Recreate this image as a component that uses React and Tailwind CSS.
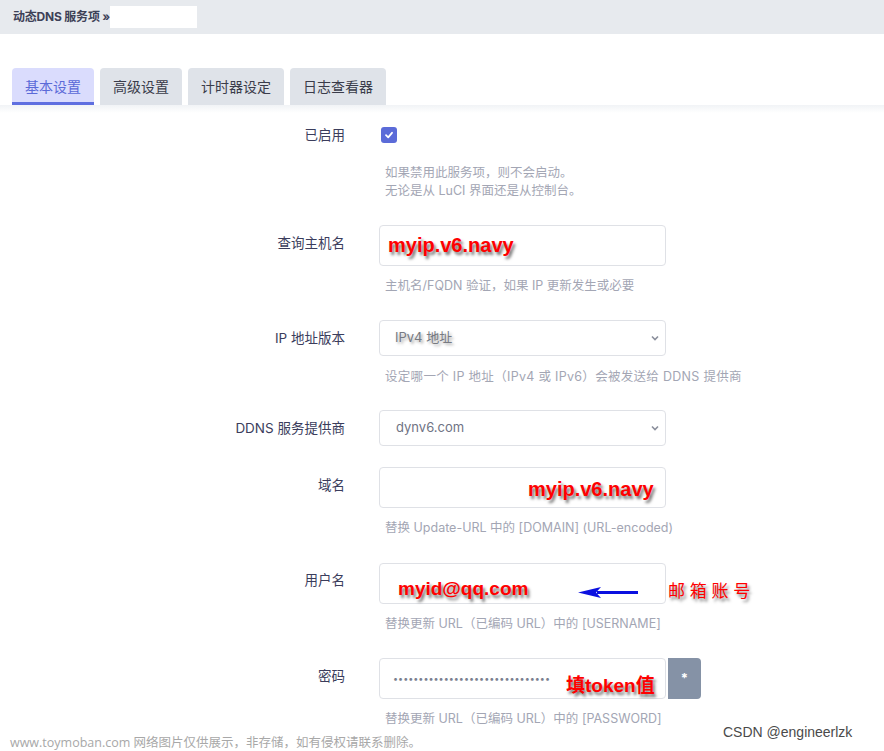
import React from 'react';

const font = { fontFamily: 'Inter, "Noto Sans CJK SC", sans-serif' };
const red = 'font-bold text-[#ff0000] [text-shadow:2px_3px_3px_rgba(0,0,0,0.55)] [font-family:"Liberation_Sans","Noto_Sans_CJK_SC",sans-serif]';

const Label = ({ children, pt = 'pt-[8px]' }) => (
  <div className={`w-[346px] shrink-0 pr-[1px] text-right text-[13.5px] leading-[20px] text-[#3b3d5c] ${pt}`}>
    {children}
  </div>
);

const Help = ({ children, mt = 'mt-[11px]' }) => (
  <div className={`${mt} pl-[6px] text-[12.5px] leading-[18px] text-[#a3a6b4]`}>{children}</div>
);

const Chevron = () => (
  <svg width="10" height="10" viewBox="0 0 10 10" className="absolute right-[5px] top-1/2 -translate-y-1/2">
    <path d="M2 3.5 L5 6.5 L8 3.5" fill="none" stroke="#8a8f9c" strokeWidth="1.6" />
  </svg>
);

export default function App() {
  const tabs = ['基本设置', '高级设置', '计时器设定', '日志查看器'];
  return (
    <div className="relative h-[751px] w-[884px] overflow-hidden bg-white" style={font}>
      {/* breadcrumb */}
      <div className="flex h-[34px] items-center bg-[#e7eaee] pl-[13px]">
        <span className="text-[12px] font-bold tracking-[-0.2px] text-[#3d4157]">动态DNS 服务项 »</span>
        <span className="ml-[0px] h-[22px] w-[87px] bg-white" />
      </div>

      {/* tabs */}
      <div className="mt-[34px] flex gap-[6px] pl-[12px]">
        {tabs.map((t, i) => (
          <div
            key={t}
            className={
              i === 0
                ? 'flex h-[37px] items-center rounded-t-[4px] border-b-[3px] border-[#5f6fe0] bg-[#dadcfd] px-[13px] pt-[3px] text-[14px] text-[#5b6ad8]'
                : 'flex h-[37px] items-center rounded-t-[4px] bg-[#dfe3e9] px-[13px] text-[14px] text-[#3a3c4a]'
            }
          >
            {t}
          </div>
        ))}
      </div>
      <div className="h-[8px] bg-gradient-to-b from-[#f1f3f6] to-white" />

      <div className="flex flex-col">
        {/* enabled */}
        <div className="mt-[14px] flex">
          <Label pt="-mt-[2px]">已启用</Label>
          <div className="ml-[33px]">
            <div className="ml-[2px] flex h-[16px] w-[16px] items-center justify-center rounded-[3px] bg-[#5b6bd8]">
              <svg width="10" height="10" viewBox="0 0 10 10">
                <path d="M2 5.2 L4.2 7.3 L8 2.8" fill="none" stroke="white" strokeWidth="1.8" strokeLinecap="round" strokeLinejoin="round" />
              </svg>
            </div>
            <Help mt="mt-[21px]">
              如果禁用此服务项，则不会启动。
              <br />
              无论是从 LuCI 界面还是从控制台。
            </Help>
          </div>
        </div>

        {/* hostname */}
        <div className="mt-[25px] flex">
          <Label>查询主机名</Label>
          <div className="ml-[33px]">
            <div className="relative h-[41px] w-[287px] rounded-[4px] border border-[#dfe1e6]">
              <span className={`absolute left-[8px] top-[8px] text-[20px] leading-[22px] ${red}`}>myip.v6.navy</span>
            </div>
            <Help>主机名/FQDN 验证，如果 IP 更新发生或必要</Help>
          </div>
        </div>

        {/* ip version */}
        <div className="mt-[25px] flex">
          <Label>IP 地址版本</Label>
          <div className="ml-[33px]">
            <div className="relative flex h-[36px] w-[287px] items-center rounded-[4px] border border-[#dfe1e6] pl-[15px] text-[13px] text-[#777a82] [text-shadow:2px_2px_3px_rgba(0,0,0,0.35)]">
              IPv4 地址
              <Chevron />
            </div>
            <Help mt="mt-[12px]">
              <span className="tracking-[0.3px]">设定哪一个 IP 地址（IPv4 或 IPv6）会被发送给 DDNS 提供商</span>
            </Help>
          </div>
        </div>

        {/* provider */}
        <div className="mt-[24px] flex">
          <Label>DDNS 服务提供商</Label>
          <div className="ml-[33px]">
            <div className="relative flex h-[36px] w-[287px] items-center rounded-[4px] border border-[#dfe1e6] pl-[16px] text-[13px] text-[#6f7384]">
              dynv6.com
              <Chevron />
            </div>
          </div>
        </div>

        {/* domain */}
        <div className="mt-[21px] flex">
          <Label>域名</Label>
          <div className="ml-[33px]">
            <div className="relative h-[41px] w-[287px] rounded-[4px] border border-[#dfe1e6]">
              <span className={`absolute left-[148px] top-[10px] text-[20px] leading-[22px] ${red}`}>myip.v6.navy</span>
            </div>
            <Help>替换 Update-URL 中的 [DOMAIN] (URL-encoded)</Help>
          </div>
        </div>

        {/* username */}
        <div className="mt-[26px] flex">
          <Label pt="pt-[7px]">用户名</Label>
          <div className="ml-[33px]">
            <div className="relative h-[41px] w-[287px] rounded-[4px] border border-[#dfe1e6]">
              <span className={`absolute left-[18px] top-[14px] text-[19px] leading-[22px] ${red}`}>myid@qq.com</span>
              <svg width="64" height="14" viewBox="0 0 64 14" className="absolute left-[197px] top-[21px]">
                <path d="M20 6 L61 6 L61 9 L20 9 Z" fill="#0b10e0" />
                <path d="M1 7.5 L24 2 L19 7.5 L24 13 Z" fill="#0b10e0" />
              </svg>
              <span className="absolute left-[288px] top-[16px] whitespace-nowrap text-[17px] leading-[22px] text-[#ff0000] [text-shadow:2px_3px_3px_rgba(0,0,0,0.5)]">
                邮 箱 账 号
              </span>
            </div>
            <Help>替换更新 URL（已编码 URL）中的 [USERNAME]</Help>
          </div>
        </div>

        {/* password */}
        <div className="mt-[25px] flex">
          <Label>密码</Label>
          <div className="ml-[33px]">
            <div className="flex">
              <div className="relative h-[41px] w-[287px] rounded-[4px] border border-[#dfe1e6]">
                <span className="absolute left-[13px] top-[12px] text-[9px] leading-[16px] text-[#7a7f8f]">
                  •••••••••••••••••••••••••••••••
                </span>
                <span className={`absolute left-[186px] top-[16px] text-[19px] leading-[22px] ${red}`}>填token值</span>
              </div>
              <div className="ml-[2px] flex h-[41px] w-[33px] items-center justify-center rounded-r-[4px] bg-[#8592a6] text-[13px] font-bold text-white">
                *
              </div>
            </div>
            <Help>替换更新 URL（已编码 URL）中的 [PASSWORD]</Help>
          </div>
        </div>
      </div>

      {/* watermarks */}
      <div className="absolute left-[723px] top-[722px] text-[14px] text-[#4a4a4a] [font-family:'Liberation_Sans',sans-serif] [text-shadow:0_0_2px_white]">
        CSDN @engineerlzk
      </div>
      <div className="absolute left-[10px] top-[734px] text-[12.5px] text-[#a8a8a8] [font-family:'Open_Sans','Noto_Sans_CJK_SC',sans-serif]">
        www.toymoban.com 网络图片仅供展示，非存储，如有侵权请联系删除。
      </div>
    </div>
  );
}
